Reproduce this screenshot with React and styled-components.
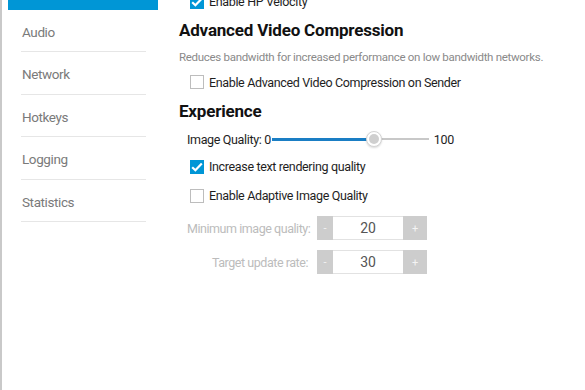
import styled, { createGlobalStyle } from "styled-components";

const GlobalStyle = createGlobalStyle`
  html, body {
    margin: 0;
    padding: 0;
    background: #fff;
    font-family: Roboto, "Liberation Sans", sans-serif;
  }
`;

const Window = styled.div`
  width: 585px;
  height: 390px;
  overflow: hidden;
  display: flex;
  border-left: 2px solid #c9c9c9;
  box-sizing: border-box;
`;

const Sidebar = styled.nav`
  width: 150px;
  padding-left: 6px;
  margin-top: -33px;
  flex-shrink: 0;
`;

const NavItem = styled.div`
  height: 42.5px;
  box-sizing: border-box;
  display: flex;
  align-items: center;
  padding-top: 3px;
  font-size: 13.5px;
  letter-spacing: -0.4px;
  color: ${(p) => (p.$active ? "#fff" : "#7a7a7a")};
  background: ${(p) => (p.$active ? "#0096d6" : "transparent")};
  margin: ${(p) => (p.$active ? "0" : "0 12px 0 13px")};
  padding-left: ${(p) => (p.$active ? "14px" : "1px")};
  border-bottom: ${(p) => (p.$active ? "none" : "1px solid #e6e6e6")};
`;

const Content = styled.main`
  flex: 1;
  padding-left: 21px;
  margin-top: -12px;
`;

const Heading = styled.h2`
  margin: 0;
  font-size: 17px;
  font-weight: 700;
  color: #111;
  letter-spacing: -0.2px;
  height: 30px;
  display: flex;
  align-items: center;
`;

const Description = styled.p`
  margin: 0;
  height: 23px;
  display: flex;
  align-items: center;
  font-size: 11.5px;
  letter-spacing: -0.3px;
  color: #8a8a8a;
`;

const CheckRow = styled.label`
  display: flex;
  align-items: center;
  gap: 5px;
  height: ${(p) => p.$h || 29}px;
  padding-left: 11px;
  font-size: 12.5px;
  color: #1e1e1e;
  letter-spacing: -0.35px;
`;

const Box = styled.span`
  width: 14px;
  height: 14px;
  box-sizing: border-box;
  border: 1px solid ${(p) => (p.$checked ? "#0096d6" : "#bdbdbd")};
  background: ${(p) => (p.$checked ? "#0096d6" : "#fff")};
  display: flex;
  align-items: center;
  justify-content: center;
`;

const SliderRow = styled.div`
  display: flex;
  align-items: center;
  height: 26px;
  padding-left: 8px;
  font-size: 12.5px;
  letter-spacing: -0.35px;
  color: #1e1e1e;
  white-space: nowrap;
`;

const Track = styled.div`
  position: relative;
  width: 157px;
  height: 16px;
  margin: 0 5px 0 1px;
  display: flex;
  align-items: center;
`;

const Fill = styled.div`
  height: 3px;
  background: #1a7ec4;
`;

const Rest = styled.div`
  flex: 1;
  height: 2px;
  background: #c8c8c8;
`;

const Thumb = styled.div`
  position: absolute;
  top: 0;
  width: 16px;
  height: 16px;
  box-sizing: border-box;
  border-radius: 50%;
  background: #fff;
  border: 1px solid #d4d4d4;
  box-shadow: 0 1px 2px rgba(0, 0, 0, 0.15);
  display: flex;
  align-items: center;
  justify-content: center;

  &::after {
    content: "";
    width: 10px;
    height: 10px;
    border-radius: 50%;
    background: #cfcfcf;
  }
`;

const StepGrid = styled.div`
  display: grid;
  grid-template-columns: 121px auto;
  column-gap: 9px;
  row-gap: 10px;
  margin-top: 6px;
  padding-left: 8px;
  align-items: center;
`;

const StepLabel = styled.span`
  text-align: right;
  white-space: nowrap;
  font-size: 12.5px;
  color: #bcbcbc;
  letter-spacing: -0.45px;
`;

const Stepper = styled.div`
  display: flex;
  height: 24px;
`;

const StepButton = styled.span`
  width: ${(p) => (p.$wide ? 24 : 16)}px;
  background: #cdcdcd;
  color: #f4f4f4;
  font-size: 11px;
  display: flex;
  align-items: center;
  justify-content: center;
`;

const StepValue = styled.span`
  width: 70px;
  border-top: 1px solid #e2e2e2;
  border-bottom: 1px solid #e2e2e2;
  box-sizing: border-box;
  display: flex;
  align-items: center;
  justify-content: center;
  font-size: 14px;
  color: #555;
`;

const Check = () => (
  <svg width="12" height="10" viewBox="0 0 12 10">
    <path d="M1.2 5.2 L4.4 8.2 L10.8 1.6" fill="none" stroke="#fff" strokeWidth="2.2" />
  </svg>
);

const Checkbox = ({ checked, label, h }) => (
  <CheckRow $h={h}>
    <Box $checked={checked}>{checked && <Check />}</Box>
    {label}
  </CheckRow>
);

const navItems = ["Audio", "Network", "Hotkeys", "Logging", "Statistics"];

export default function App() {
  const quality = 65;
  return (
    <>
      <GlobalStyle />
      <Window>
        <Sidebar>
          <NavItem $active />
          {navItems.map((item) => (
            <NavItem key={item}>{item}</NavItem>
          ))}
        </Sidebar>
        <Content>
          <Checkbox checked label="Enable HP Velocity" h={27} />
          <Heading>Advanced Video Compression</Heading>
          <Description>Reduces bandwidth for increased performance on low bandwidth networks.</Description>
          <Checkbox label="Enable Advanced Video Compression on Sender" h={28} />
          <Heading>Experience</Heading>
          <SliderRow>
            Image Quality: 0
            <Track>
              <Fill style={{ width: `${quality}%` }} />
              <Rest />
              <Thumb style={{ left: `calc(${quality}% - 8px)` }} />
            </Track>
            100
          </SliderRow>
          <Checkbox checked label="Increase text rendering quality" />
          <Checkbox label="Enable Adaptive Image Quality" />
          <StepGrid>
            <StepLabel>Minimum image quality:</StepLabel>
            <Stepper>
              <StepButton>-</StepButton>
              <StepValue>20</StepValue>
              <StepButton $wide>+</StepButton>
            </Stepper>
            <StepLabel>Target update rate:</StepLabel>
            <Stepper>
              <StepButton>-</StepButton>
              <StepValue>30</StepValue>
              <StepButton $wide>+</StepButton>
            </Stepper>
          </StepGrid>
        </Content>
      </Window>
    </>
  );
}
